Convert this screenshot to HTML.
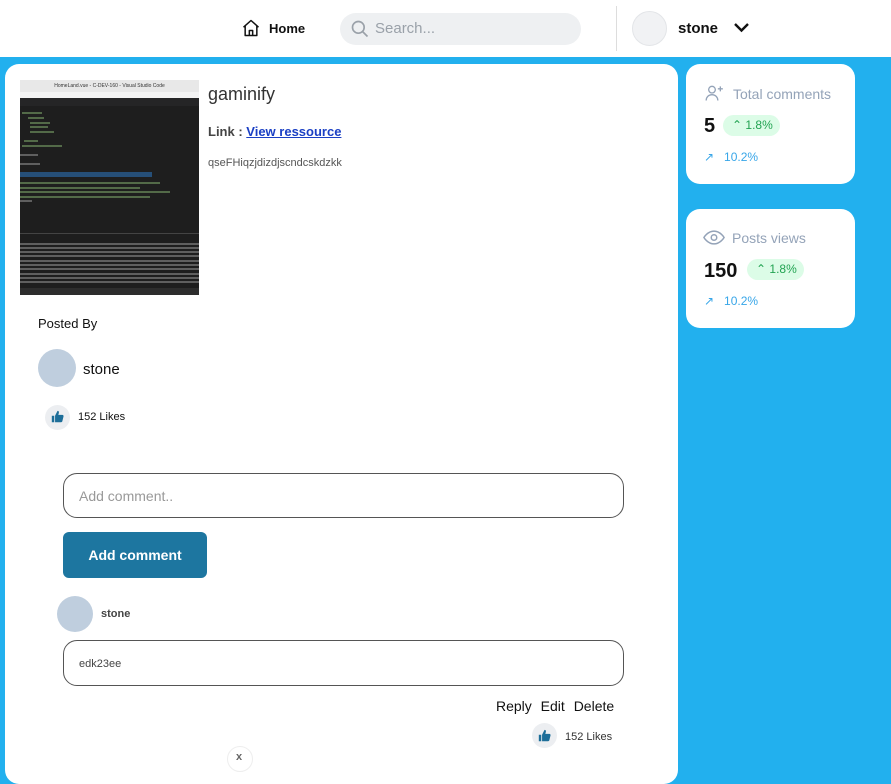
<!DOCTYPE html>
<html><head><style>
*{margin:0;padding:0;box-sizing:border-box}
body{width:891px;height:759px;overflow:hidden;background:#22b0ee;font-family:"Liberation Sans","DejaVu Sans",sans-serif;position:relative}
.a{position:absolute}
.hdr{left:0;top:0;width:891px;height:57px;background:#fff}
.card{background:#fff;border-radius:14px}
.circ{border-radius:50%}
.ln{position:absolute;height:2px;background:#6a8a5a;opacity:.7}
.tl{position:absolute;height:2px;background:#8a8a8a;opacity:.6}
</style></head><body>
<div class="a hdr">
  <svg class="a" style="left:241px;top:18px" width="20" height="20" viewBox="0 0 24 24" fill="none" stroke="#111" stroke-width="1.8" stroke-linejoin="round"><path d="M3 11 12 3l9 8"/><path d="M5 9.5V21h14V9.5"/><path d="M10 21v-6h4v6"/></svg>
  <div class="a" style="left:269px;top:21px;font-size:13px;font-weight:bold;color:#111">Home</div>
  <div class="a" style="left:340px;top:13px;width:241px;height:32px;border-radius:16px;background:#eef0f2"></div>
  <svg class="a" style="left:350px;top:19px" width="20" height="20" viewBox="0 0 24 24" fill="none" stroke="#9aa1a9" stroke-width="2"><circle cx="10" cy="10" r="7"/><path d="M15 15l6 6"/></svg>
  <div class="a" style="left:375px;top:20px;font-size:15px;color:#9aa1a9">Search...</div>
  <div class="a" style="left:616px;top:6px;width:1px;height:45px;background:#ddd"></div>
  <div class="a circ" style="left:632px;top:11px;width:35px;height:35px;border:1px solid #e3e5e8;background:#f1f2f4"></div>
  <div class="a" style="left:678px;top:20px;font-size:15px;font-weight:bold;color:#111">stone</div>
  <svg class="a" style="left:733px;top:21px" width="17" height="14" viewBox="0 0 17 14" fill="none" stroke="#111" stroke-width="2.4"><path d="M2 3l6.5 6.5L15 3"/></svg>
</div>

<div class="a card" style="left:5px;top:64px;width:673px;height:720px"></div>
<div class="a" style="left:20px;top:80px;width:179px;height:215px;background:#1e1e1e;overflow:hidden">
  <div style="height:12px;background:#e8e8e8;font-size:5px;color:#333;text-align:center;line-height:12px">HomeLand.vue - C-DEV-160 - Visual Studio Code</div>
  <div style="height:6px;background:#f3f3f3"></div>
  <div style="height:8px;background:#252526"></div>
  <div class="ln" style="left:2px;top:32px;width:20px"></div>
  <div class="ln" style="left:8px;top:37px;width:16px"></div>
  <div class="ln" style="left:10px;top:42px;width:20px"></div>
  <div class="ln" style="left:10px;top:46px;width:18px"></div>
  <div class="ln" style="left:10px;top:51px;width:24px"></div>
  <div class="ln" style="left:4px;top:60px;width:14px"></div>
  <div class="ln" style="left:2px;top:65px;width:40px"></div>
  <div class="tl" style="left:0;top:74px;width:18px"></div>
  <div class="tl" style="left:0;top:83px;width:20px"></div>
  <div style="position:absolute;left:0;top:92px;width:132px;height:5px;background:#264f78"></div>
  <div class="ln" style="left:0;top:102px;width:140px"></div>
  <div class="ln" style="left:0;top:107px;width:120px"></div>
  <div class="ln" style="left:0;top:111px;width:150px"></div>
  <div class="ln" style="left:0;top:116px;width:130px"></div>
  <div class="tl" style="left:0;top:120px;width:12px"></div>
  <div style="position:absolute;left:0;top:153px;width:179px;height:1px;background:#444"></div>
  <div class="tl" style="left:0;top:163px;width:179px"></div>
  <div class="tl" style="left:0;top:167px;width:179px"></div>
  <div class="tl" style="left:0;top:171px;width:179px"></div>
  <div class="tl" style="left:0;top:175px;width:179px"></div>
  <div class="tl" style="left:0;top:180px;width:179px"></div>
  <div class="tl" style="left:0;top:184px;width:179px"></div>
  <div class="tl" style="left:0;top:188px;width:179px"></div>
  <div class="tl" style="left:0;top:193px;width:179px"></div>
  <div class="tl" style="left:0;top:197px;width:179px"></div>
  <div class="tl" style="left:0;top:201px;width:179px"></div>
  <div style="position:absolute;left:0;top:208px;width:179px;height:7px;background:#2d2d2d"></div>
</div>
<div class="a" style="left:208px;top:84px;font-size:18px;color:#333">gaminify</div>
<div class="a" style="left:208px;top:124px;font-size:13px;font-weight:bold;color:#444">Link : <span style="color:#1a3fc4;text-decoration:underline">View ressource</span></div>
<div class="a" style="left:208px;top:157px;font-size:11px;color:#555">qseFHiqzjdizdjscndcskdzkk</div>
<div class="a" style="left:38px;top:316px;font-size:13px;color:#111">Posted By</div>
<div class="a circ" style="left:38px;top:349px;width:38px;height:38px;background:#bfcede"></div>
<div class="a" style="left:83px;top:361px;font-size:15px;color:#111">stone</div>
<div class="a circ" style="left:45px;top:405px;width:25px;height:25px;background:#eceef1"></div>
<svg class="a" style="left:51px;top:410px" width="13" height="13" viewBox="0 0 16 16"><path fill="#1d6e99" d="M1 7h3v8H1zM5 7l3-6c1.5 0 2 1 1.7 2.5L9 6h5c1 0 1.7 1 1.4 2l-1.5 6c-.3.7-.8 1-1.5 1H5z"/></svg>
<div class="a" style="left:78px;top:411px;font-size:11px;color:#111">152 Likes</div>

<div class="a" style="left:63px;top:473px;width:561px;height:45px;border:1px solid #555;border-radius:14px"></div>
<div class="a" style="left:79px;top:488px;font-size:14px;color:#999">Add comment..</div>
<div class="a" style="left:63px;top:532px;width:144px;height:46px;background:#1d76a0;border-radius:6px;color:#fff;font-weight:bold;font-size:14px;text-align:center;line-height:46px">Add comment</div>

<div class="a circ" style="left:57px;top:596px;width:36px;height:36px;background:#bfcede"></div>
<div class="a" style="left:101px;top:608px;font-size:11px;font-weight:bold;color:#444">stone</div>
<div class="a" style="left:63px;top:640px;width:561px;height:46px;border:1px solid #555;border-radius:14px"></div>
<div class="a" style="left:79px;top:658px;font-size:11px;color:#444">edk23ee</div>
<div class="a" style="left:496px;top:698px;font-size:14px;color:#111;word-spacing:5px">Reply Edit Delete</div>
<div class="a circ" style="left:532px;top:723px;width:25px;height:25px;background:#eceef1"></div>
<svg class="a" style="left:538px;top:729px" width="13" height="13" viewBox="0 0 16 16"><path fill="#1d6e99" d="M1 7h3v8H1zM5 7l3-6c1.5 0 2 1 1.7 2.5L9 6h5c1 0 1.7 1 1.4 2l-1.5 6c-.3.7-.8 1-1.5 1H5z"/></svg>
<div class="a" style="left:565px;top:731px;font-size:11px;color:#333">152 Likes</div>
<div class="a circ" style="left:227px;top:746px;width:26px;height:26px;border:1px solid #eee;background:#fff"></div>
<div class="a" style="left:236px;top:751px;font-size:11px;font-weight:bold;color:#666">x</div>

<div class="a card" style="left:686px;top:64px;width:169px;height:120px"></div>
<svg class="a" style="left:704px;top:83px" width="21" height="20" viewBox="0 0 24 24" fill="none" stroke="#94a3b8" stroke-width="1.6"><circle cx="9" cy="8" r="4"/><path d="M2 21c0-4 3-7 7-7s7 3 7 7"/><path d="M19 4v6M16 7h6"/></svg>
<div class="a" style="left:733px;top:86px;font-size:14px;color:#94a3b8">Total comments</div>
<div class="a" style="left:704px;top:115px;font-size:20px;font-weight:bold;color:#111">5</div>
<div class="a" style="left:723px;top:115px;width:57px;height:21px;border-radius:11px;background:#dcfce7;color:#22a352;font-size:12px;line-height:21px;padding-left:9px">⌃ 1.8%</div>
<div class="a" style="left:704px;top:150px;font-size:12px;color:#38a6e8">↗&nbsp;&nbsp; 10.2%</div>

<div class="a card" style="left:686px;top:209px;width:169px;height:119px"></div>
<svg class="a" style="left:703px;top:229px" width="22" height="17" viewBox="0 0 24 18" fill="none" stroke="#94a3b8" stroke-width="1.6"><path d="M1 9s4-7 11-7 11 7 11 7-4 7-11 7S1 9 1 9z"/><circle cx="12" cy="9" r="3"/></svg>
<div class="a" style="left:732px;top:230px;font-size:14px;color:#94a3b8">Posts views</div>
<div class="a" style="left:704px;top:260px;font-size:20px;font-weight:bold;color:#111">150</div>
<div class="a" style="left:747px;top:259px;width:57px;height:21px;border-radius:11px;background:#dcfce7;color:#22a352;font-size:12px;line-height:21px;padding-left:9px">⌃ 1.8%</div>
<div class="a" style="left:704px;top:294px;font-size:12px;color:#38a6e8">↗&nbsp;&nbsp; 10.2%</div>
</body></html>
